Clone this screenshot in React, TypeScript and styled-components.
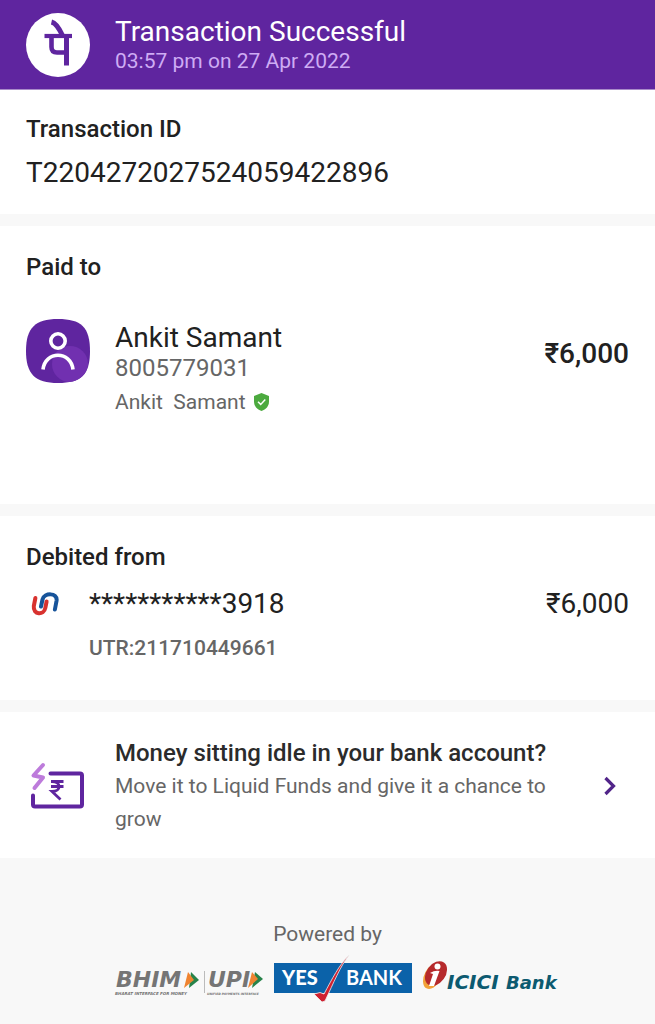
import React from "react";
import styled, { createGlobalStyle } from "styled-components";

const GlobalStyle = createGlobalStyle`
  *, *::before, *::after { box-sizing: border-box; }
  body {
    margin: 0;
    background: #f8f8f8;
    color: #212121;
    font-family: Roboto, "Liberation Sans", sans-serif;
  }
  h1, h2, h3, p { margin: 0; }
`;

const Header = styled.header`
  display: flex;
  align-items: center;
  gap: 25px;
  padding: 13px 26px 12px;
  background: #5f259f;
  border-bottom: 1px solid #a98bc9;
`;

const HeaderTitle = styled.h1`
  font-size: 28px;
  line-height: 32px;
  font-weight: 400;
  color: #fff;
`;

const HeaderTime = styled.p`
  font-size: 21px;
  line-height: 26px;
  color: #ceacf4;
`;

const Stack = styled.main`
  display: flex;
  flex-direction: column;
  gap: 12px;
`;

const Section = styled.section<{ $top: number; $bottom: number }>`
  padding: ${(p) => p.$top}px 26px ${(p) => p.$bottom}px;
  background: #fff;
`;

const SectionTitle = styled.h2`
  font-size: 24px;
  line-height: 32px;
  font-weight: 500;
`;

const Reference = styled.p`
  margin-top: 12px;
  font-size: 28px;
  line-height: 32px;
`;

const Row = styled.div<{ $top: number }>`
  display: flex;
  align-items: flex-start;
  gap: 25px;
  margin-top: ${(p) => p.$top}px;
`;

const IconSlot = styled.div<{ $width: number; $top?: number }>`
  flex: none;
  display: flex;
  justify-content: center;
  width: ${(p) => p.$width}px;
  padding-top: ${(p) => p.$top ?? 0}px;
`;

const Details = styled.div<{ $top?: number }>`
  flex: 1;
  min-width: 0;
  padding-top: ${(p) => p.$top ?? 0}px;
`;

const Name = styled.p`
  font-size: 28px;
  line-height: 32px;
`;

const Phone = styled.p`
  font-size: 24px;
  line-height: 28px;
  color: #666;
`;

const Verified = styled.p`
  display: flex;
  align-items: center;
  gap: 8px;
  margin-top: 4px;
  font-size: 21px;
  line-height: 32px;
  color: #666;
  white-space: pre;
`;

const Amount = styled.p<{ $strong?: boolean; $top?: number }>`
  padding-top: ${(p) => p.$top ?? 0}px;
  font-size: 28px;
  line-height: 32px;
  font-weight: ${(p) => (p.$strong ? 500 : 400)};
`;

const Utr = styled.p`
  margin-top: 12px;
  font-size: 21px;
  line-height: 32px;
  font-weight: 500;
  color: #666;
`;

const Promo = styled.a`
  display: flex;
  align-items: center;
  gap: 25px;
  padding: 24px 35px 22px 26px;
  background: #fff;
  color: inherit;
  text-decoration: none;
`;

const PromoTitle = styled.h3`
  font-size: 24px;
  line-height: 34px;
  font-weight: 500;
  color: #2b2b2b;
`;

const PromoText = styled.p`
  font-size: 21px;
  line-height: 33px;
  color: #666;
`;

const Footer = styled.footer`
  display: flex;
  flex-direction: column;
  align-items: center;
  padding: 60px 26px 12px;
  font-size: 21px;
  line-height: 32px;
  color: #666;
`;

const Partners = styled.div`
  display: flex;
  align-items: flex-start;
  justify-content: center;
  gap: 10px;
  padding-left: 18px;
  margin-top: 5px;
`;

const PhonePeLogo = () => (
  <svg width="64" height="64" viewBox="0 0 64 64" role="img" aria-label="PhonePe">
    <circle cx="32" cy="32" r="32" fill="#fff" />
    <g fill="none" stroke="#5f259f" strokeWidth="4.6">
      <path d="M18.500 23H46" strokeWidth="4.200" />
      <path d="M25.500 9C30 10 33 15 36.500 22.500" strokeWidth="5" />
      <path d="M25.500 24V34Q25.500 39.500 31 39.500H41" />
      <path d="M40.500 23V52.500" strokeWidth="5" />
    </g>
  </svg>
);

const ContactIcon = () => (
  <svg width="64" height="64" viewBox="0 0 64 64" aria-hidden="true">
    <defs>
      <clipPath id="contact-shape">
        <path d="M32 0C55 0 64 8 64 32S55 64 32 64 0 55 0 32 9 0 32 0Z" />
      </clipPath>
    </defs>
    <g clipPath="url(#contact-shape)">
      <rect width="64" height="64" fill="#5f259f" />
      <circle cx="44" cy="45" r="18" fill="#7130b0" />
    </g>
    <g fill="none" stroke="#fff" strokeWidth="3.6">
      <circle cx="32" cy="22" r="7.200" />
      <path d="M17 50.500C19 31.500 45 31.500 47 50.500" />
    </g>
  </svg>
);

const ShieldIcon = () => (
  <svg width="15" height="18" viewBox="0 0 15 18" role="img" aria-label="Verified">
    <path d="M7.500 0L15 3V8.500C15 13 12 16.600 7.500 18C3 16.600 0 13 0 8.500V3Z" fill="#4caa3f" />
    <path d="M4 8.800L6.700 11.400L11.300 6.600" fill="none" stroke="#fff" strokeWidth="1.500" />
  </svg>
);

const BankIcon = () => (
  <svg width="28" height="24" viewBox="0 0 28 24" aria-hidden="true" fill="none" strokeWidth="4" strokeLinecap="round">
    <path d="M4.400 6L2.800 14C1.800 23 13 23.500 14.300 16L15.600 9.500" stroke="#d8322f" />
    <path d="M10 14.500L11.500 7.500C13.300 0.500 26.600 0.500 25.600 8.500L23.900 17.500" stroke="#17549a" />
  </svg>
);

const FundsIcon = () => (
  <svg width="56" height="48" viewBox="0 0 56 48" aria-hidden="true" fill="none">
    <path d="M20.500 11.500H50Q52 11.500 52 13.500V42.500Q52 44.500 50 44.500H5Q3 44.500 3 42.500V33.500" stroke="#5f259f" strokeWidth="4" strokeLinecap="round" />
    <path d="M13 3L3.500 13.500L13 15.500L4.500 26" stroke="#bd7bdb" strokeWidth="4" strokeLinecap="round" strokeLinejoin="round" />
    <path d="M21 19.500H33.500M21 24.500H33.500M22 19.500C31.500 19.500 31.500 29.500 22 29.500L30.500 37.500" stroke="#5f259f" strokeWidth="2.800" />
  </svg>
);

const Chevron = () => (
  <svg width="20" height="20" viewBox="0 0 20 20" aria-hidden="true">
    <path d="M5.500 2L13.500 10L5.500 18" fill="none" stroke="#512489" strokeWidth="3.200" />
  </svg>
);

const BhimUpiLogo = () => (
  <svg width="150" height="48" viewBox="0 0 150 48" role="img" aria-label="BHIM UPI">
    <g fontFamily="DejaVu Sans" fontStyle="italic" fontWeight="700" fill="#757575">
      <text x="2" y="32" fontSize="22">BHIM</text>
      <text x="94" y="32" fontSize="22">UPI</text>
      <text x="1" y="40" fontSize="4">BHARAT INTERFACE FOR MONEY</text>
      <text x="93" y="40" fontSize="3">UNIFIED PAYMENTS INTERFACE</text>
    </g>
    <path d="M90.500 16V38" stroke="#bbb" />
    <path d="M77 17L85 25L75 33Z" fill="#27834a" />
    <path d="M74 17L80 25L70 33Z" fill="#ef8431" />
    <path d="M141 17L149 24L138 33Z" fill="#27834a" />
    <path d="M138 17L144 24L134 33Z" fill="#ef8431" />
  </svg>
);

const YesBankLogo = () => (
  <svg width="138" height="48" viewBox="0 0 138 48" role="img" aria-label="Yes Bank">
    <rect y="8" width="138" height="30" fill="#0b62a9" />
    <g fontFamily="Lato" fontWeight="900" fill="#fff" fontSize="20">
      <text x="8" y="30">YES</text>
      <text x="72" y="30" fontWeight="700">BANK</text>
    </g>
    <path d="M75 0C66 12 60 27 51 46L48 47L40 39L46 37.500L50 39C58 24 65 10 75 0Z" fill="#cf2030" stroke="#eee" strokeWidth="0.800" />
  </svg>
);

const IciciLogo = () => (
  <svg width="138" height="48" viewBox="0 0 138 48" role="img" aria-label="ICICI Bank">
    <ellipse cx="11" cy="21" rx="8.500" ry="14" transform="rotate(28 11 21)" fill="#f2a23a" />
    <ellipse cx="14" cy="18.500" rx="9.500" ry="13.500" transform="rotate(36 14 18.500)" fill="#b62a2c" />
    <circle cx="15.500" cy="11.500" r="3" fill="#fff" />
    <path d="M8 18Q13 15 17.500 16L12 31H7L11 19Z" fill="#fff" />
    <g fontStyle="italic" fontWeight="700" fill="#0c5a70" fontFamily="DejaVu Sans">
      <text x="25" y="34" fontSize="20">ICICI</text>
      <text x="84" y="34" fontSize="18">Bank</text>
    </g>
  </svg>
);

export default function App() {
  return (
    <>
      <GlobalStyle />
      <Header>
        <PhonePeLogo />
        <div>
          <HeaderTitle>Transaction Successful</HeaderTitle>
          <HeaderTime>03:57 pm on 27 Apr 2022</HeaderTime>
        </div>
      </Header>
      <Stack>
        <Section $top={23} $bottom={25}>
          <SectionTitle>Transaction ID</SectionTitle>
          <Reference>T2204272027524059422896</Reference>
        </Section>
        <Section $top={25} $bottom={86}>
          <SectionTitle>Paid to</SectionTitle>
          <Row $top={36}>
            <IconSlot $width={64}>
              <ContactIcon />
            </IconSlot>
            <Details $top={3}>
              <Name>Ankit Samant</Name>
              <Phone>8005779031</Phone>
              <Verified>
                {"Ankit  Samant"}
                <ShieldIcon />
              </Verified>
            </Details>
            <Amount $strong $top={19}>₹6,000</Amount>
          </Row>
        </Section>
        <Section $top={25} $bottom={36}>
          <SectionTitle>Debited from</SectionTitle>
          <Row $top={15}>
            <IconSlot $width={38} $top={4}>
              <BankIcon />
            </IconSlot>
            <Details>
              <Name>***********3918</Name>
              <Utr>UTR:211710449661</Utr>
            </Details>
            <Amount>₹6,000</Amount>
          </Row>
        </Section>
        <Promo href="#liquid-funds">
          <IconSlot $width={64}>
            <FundsIcon />
          </IconSlot>
          <Details>
            <PromoTitle>Money sitting idle in your bank account?</PromoTitle>
            <PromoText>Move it to Liquid Funds and give it a chance to grow</PromoText>
          </Details>
          <Chevron />
        </Promo>
      </Stack>
      <Footer>
        <p>Powered by</p>
        <Partners>
          <BhimUpiLogo />
          <YesBankLogo />
          <IciciLogo />
        </Partners>
      </Footer>
    </>
  );
}
